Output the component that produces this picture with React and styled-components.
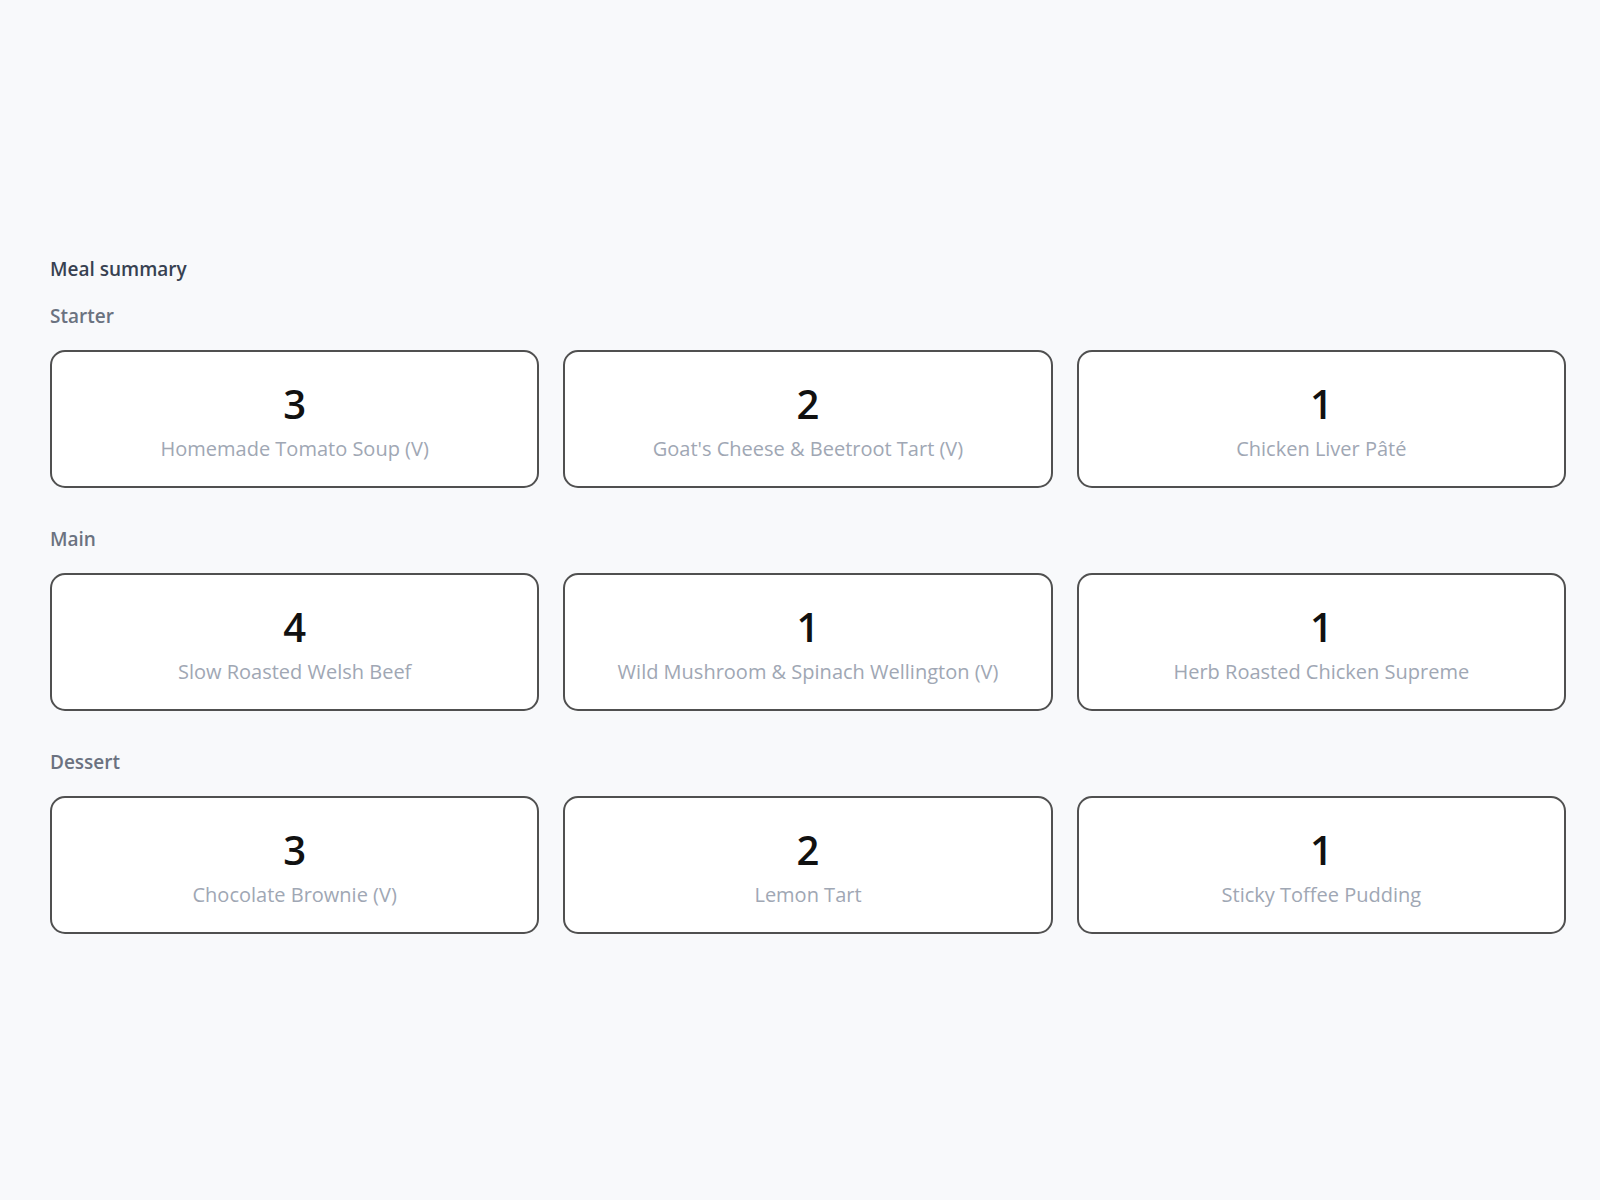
import styled, { createGlobalStyle } from 'styled-components';

const GlobalStyle = createGlobalStyle`
  body {
    margin: 0;
    background-color: #f8f9fb;
    font-family: "Open Sans", "Noto Sans", sans-serif;
  }
`;

const courses = [
  {
    name: 'Starter',
    dishes: [
      { count: 3, title: 'Homemade Tomato Soup (V)' },
      { count: 2, title: "Goat's Cheese & Beetroot Tart (V)" },
      { count: 1, title: 'Chicken Liver Pâté' },
    ],
  },
  {
    name: 'Main',
    dishes: [
      { count: 4, title: 'Slow Roasted Welsh Beef' },
      { count: 1, title: 'Wild Mushroom & Spinach Wellington (V)' },
      { count: 1, title: 'Herb Roasted Chicken Supreme' },
    ],
  },
  {
    name: 'Dessert',
    dishes: [
      { count: 3, title: 'Chocolate Brownie (V)' },
      { count: 2, title: 'Lemon Tart' },
      { count: 1, title: 'Sticky Toffee Pudding' },
    ],
  },
];

const App = () => {
  return (
    <>
      <GlobalStyle />
      <Page>
        <Heading>Meal summary</Heading>
        {courses.map((course) => (
          <Course key={course.name}>
            <CourseLabel>{course.name}</CourseLabel>
            <DishGrid>
              {course.dishes.map((dish) => (
                <DishCard key={dish.title}>
                  <Count>{dish.count}</Count>
                  <DishName>{dish.title}</DishName>
                </DishCard>
              ))}
            </DishGrid>
          </Course>
        ))}
      </Page>
    </>
  );
};

const Page = styled.main`
  padding: 255px 34px 80px 50px;
  min-height: 1200px;
  box-sizing: border-box;
`;

const Heading = styled.h2`
  margin: 0 0 20px;
  font-size: 19px;
  line-height: 28px;
  font-weight: 600;
  color: #374151;
`;

const Course = styled.section`
  margin-bottom: 38px;
`;

const CourseLabel = styled.h3`
  margin: 0 0 21px;
  font-size: 19px;
  line-height: 26px;
  font-weight: 600;
  color: #6b7280;
`;

const DishGrid = styled.div`
  display: grid;
  grid-template-columns: repeat(3, 1fr);
  gap: 24px;
`;

const DishCard = styled.div`
  height: 138px;
  box-sizing: border-box;
  padding: 30px 16px 0;
  display: flex;
  flex-direction: column;
  align-items: center;
  background-color: #ffffff;
  border: 2px solid #505050;
  border-radius: 15px;
`;

const Count = styled.div`
  font-size: 40px;
  line-height: 44px;
  font-weight: 600;
  color: #111111;
`;

const DishName = styled.div`
  margin-top: 10px;
  font-size: 20px;
  line-height: 26px;
  color: #a0a7b4;
  text-align: center;
`;

export default App;
